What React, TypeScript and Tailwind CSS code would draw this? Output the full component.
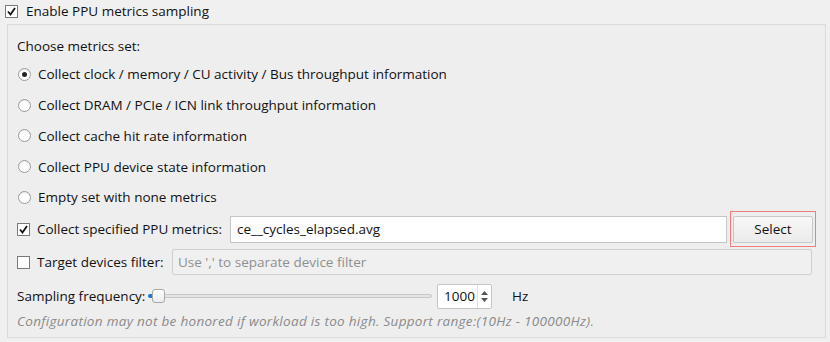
import React from 'react';

const font = { fontFamily: '"Segoe UI", "Open Sans", "Noto Sans", sans-serif' };

const Check: React.FC<{ checked?: boolean }> = ({ checked }) => (
    <span className="flex h-[13px] w-[13px] shrink-0 items-center justify-center border border-[#7a7a7a] bg-white">
        {checked && (
            <svg width="9" height="9" viewBox="0 0 9 9">
                <path d="M1 4.5 L3.5 7.5 L8 1" fill="none" stroke="#111" strokeWidth="1.8" />
            </svg>
        )}
    </span>
);

const Radio: React.FC<{ checked?: boolean }> = ({ checked }) => (
    <span className="flex h-[13px] w-[13px] shrink-0 items-center justify-center rounded-full border border-[#9a9a9a] bg-white shadow-[inset_0_1px_1px_rgba(0,0,0,0.08)]">
        {checked && <span className="h-[5px] w-[5px] rounded-full bg-[#222]" />}
    </span>
);

const options = [
    'Collect clock / memory / CU activity / Bus throughput information',
    'Collect DRAM / PCIe / ICN link throughput information',
    'Collect cache hit rate information',
    'Collect PPU device state information',
    'Empty set with none metrics',
];

export default function App() {
    return (
        <div className="h-[342px] w-[830px] whitespace-nowrap bg-[#f0f0f0] text-[13.5px] text-[#111]" style={font}>
            <div className="flex h-[22px] items-center gap-[8px] pl-[5px] pt-[1px]">
                <Check checked />
                <span>Enable PPU metrics sampling</span>
            </div>
            <div className="ml-[7px] mr-[4px] mt-[2px] h-[314px] border border-[#dadada] bg-[#eeeeee] pl-[9px] pr-[9px]">
                <div className="flex h-[32px] items-center pt-[10px]">Choose metrics set:</div>
                <div className="mt-[2px] flex flex-col">
                    {options.map((o, i) => (
                        <div key={o} className="flex h-[30.75px] items-center gap-[7px] pl-[1px]">
                            <Radio checked={i === 0} />
                            <span>{o}</span>
                        </div>
                    ))}
                </div>
                <div className="flex h-[33px] items-center">
                    <Check checked />
                    <span className="ml-[7px] w-[185px] shrink-0">Collect specified PPU metrics:</span>
                    <div className="ml-[8px] flex h-[27px] flex-1 items-center border border-[#c5c5c5] bg-white px-[6px]">
                        ce__cycles_elapsed.avg
                    </div>
                    <div className="ml-[3px] flex h-[36px] items-center border border-[#f07c7c] px-[2px]">
                        <button className="h-[27px] w-[80px] rounded-[2px] border border-[#c8c8c8] bg-gradient-to-b from-[#f7f7f7] to-[#ebebeb] text-[#111]">
                            Select
                        </button>
                    </div>
                </div>
                <div className="flex h-[33px] items-center">
                    <Check />
                    <span className="ml-[7px] w-[128px] shrink-0">Target devices filter:</span>
                    <div className="ml-[7px] mr-[4px] flex h-[26px] flex-1 items-center rounded-[2px] border border-[#cfcfcf] bg-[#f0f0f0] px-[5px] text-[#8f8f8f]">
                        Use ',' to separate device filter
                    </div>
                </div>
                <div className="flex h-[35px] items-center">
                    <span className="w-[131px] shrink-0">Sampling frequency:</span>
                    <div className="relative flex h-[14px] w-[284px] items-center">
                        <div className="h-[4px] w-full rounded-full border border-[#c9c9c9] bg-[#e4e4e4]" />
                        <div className="absolute left-[0px] h-[4px] w-[6px] rounded-l-full bg-[#1f7ad6]" />
                        <div className="absolute left-[4px] h-[14px] w-[13px] rounded-[3px] border border-[#a9a9a9] bg-gradient-to-b from-white to-[#ececec]" />
                    </div>
                    <div className="ml-[5px] flex h-[25px] w-[55px] items-center rounded-[2px] border border-[#c5c5c5] bg-white pl-[6px]">
                        <span className="flex-1">1000</span>
                        <div className="flex h-full w-[14px] flex-col items-center justify-center gap-[3px] border-l border-[#e0e0e0]">
                            <svg width="7" height="4" viewBox="0 0 7 4">
                                <path d="M0 4 L3.5 0 L7 4 Z" fill="#555" />
                            </svg>
                            <svg width="7" height="4" viewBox="0 0 7 4">
                                <path d="M0 0 L3.5 4 L7 0 Z" fill="#555" />
                            </svg>
                        </div>
                    </div>
                    <span className="ml-[20px]">Hz</span>
                </div>
                <div className="flex h-[14px] items-center italic tracking-[0.3px] text-[#8a8a8a]">
                    Configuration may not be honored if workload is too high. Support range:(10Hz - 100000Hz).
                </div>
            </div>
        </div>
    );
}
